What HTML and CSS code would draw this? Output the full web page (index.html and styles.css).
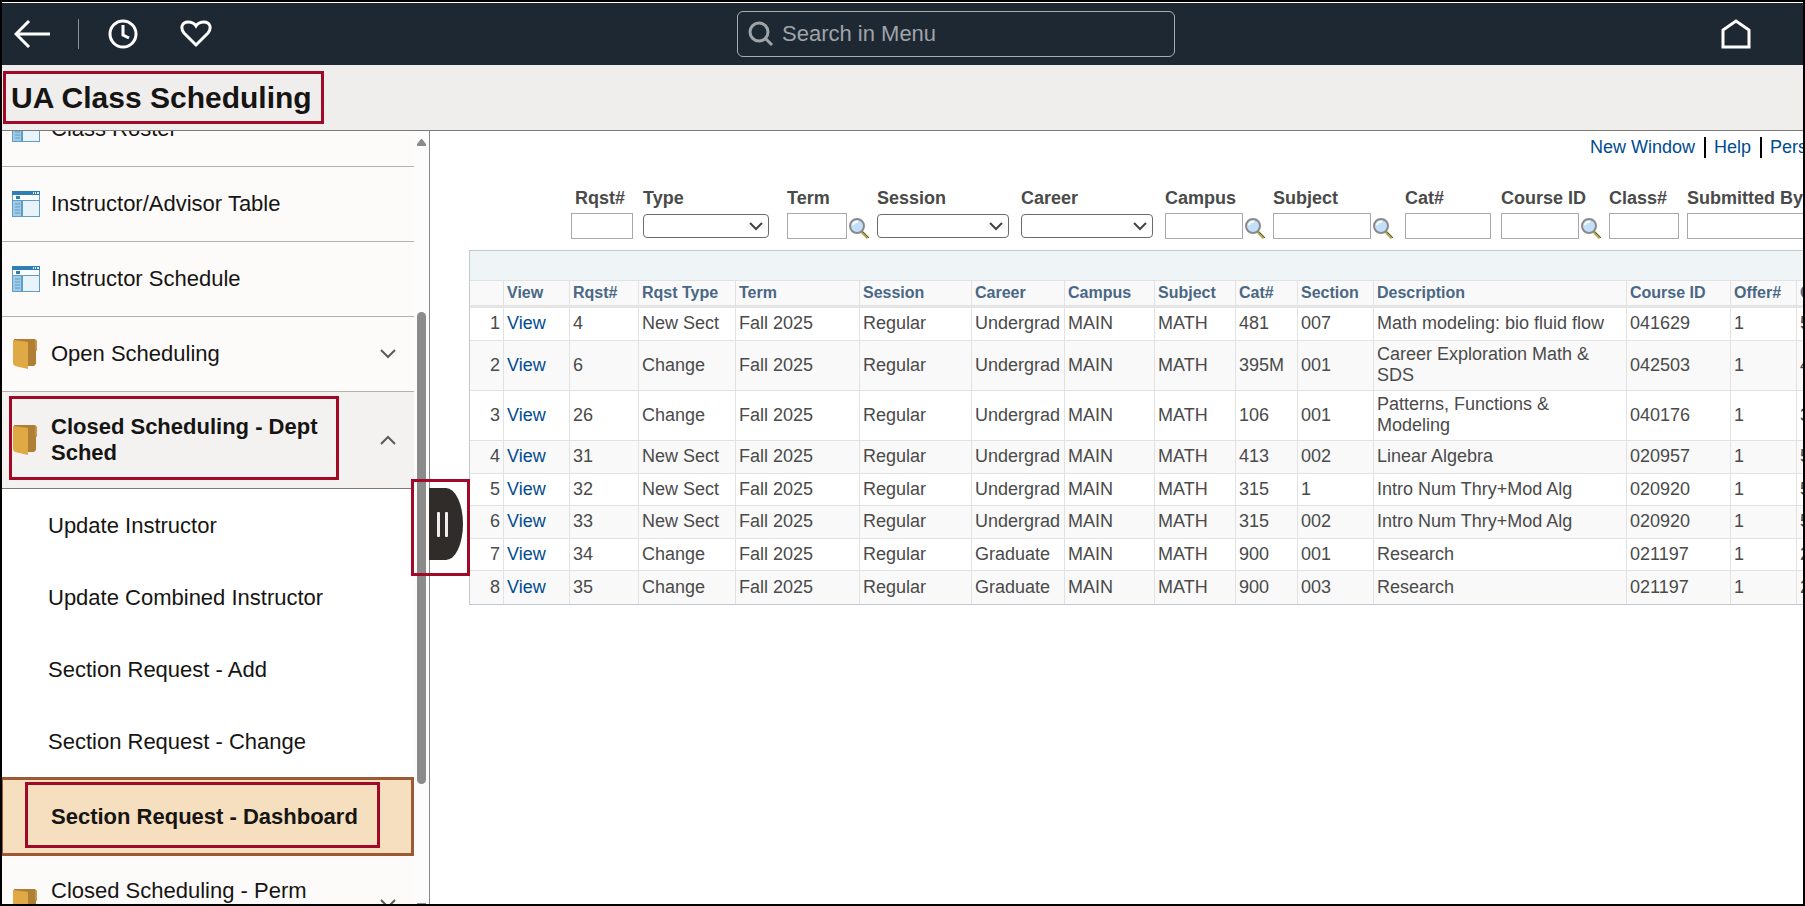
FILE: index.html
```
<!DOCTYPE html>
<html lang="en">
<head>
    <meta charset="UTF-8">
    <meta name="viewport" content="width=device-width, initial-scale=1.0">
    <title>UA Class Scheduling</title>
    <link rel="stylesheet" href="styles.css">
</head>
<body>
    <!-- shared icons -->
    <svg class="defs" width="0" height="0" aria-hidden="true">
        <symbol id="icon-page" viewBox="0 0 28 26">
            <rect x="0" y="0" width="28" height="26" fill="#5f9dc6"/>
            <rect x="0" y="0" width="28" height="4" fill="#2f7fb5"/>
            <path d="M21 1h1v2h-1zM23 1h1v2h-1zM25 1h2v2h-2z" fill="#d9ecf7"/>
            <rect x="1" y="4" width="26" height="5" fill="#ffffff"/>
            <rect x="4" y="5" width="4" height="3" fill="#2f7fb5"/>
            <rect x="1" y="10" width="8" height="15" fill="#9fcbe6"/>
            <path d="M3 13h5M3 16h5M3 19h5M3 22h5" stroke="#5f9dc6" stroke-width="1"/>
            <rect x="11" y="10" width="16" height="15" fill="#e8f3fa"/>
        </symbol>
        <symbol id="icon-folder" viewBox="0 0 26 31">
            <path d="M2 0h21l2 2v9l-1 1v13l-2 2h-7L2 4z" fill="#b07f35"/>
            <path d="M23 1h1l1 2v7l-2 1z" fill="#c8984a"/>
            <path d="M1 1l15 2v27L3 27q-2-1-2-3z" fill="#dfa945"/>
        </symbol>
        <symbol id="icon-down" viewBox="0 0 16 10">
            <path d="M1 1l7 7 7-7" fill="none" stroke="#5c5a58" stroke-width="2"/>
        </symbol>
        <symbol id="icon-up" viewBox="0 0 16 10">
            <path d="M1 9l7-7 7 7" fill="none" stroke="#5c5a58" stroke-width="2"/>
        </symbol>
        <symbol id="icon-lookup" viewBox="0 0 20 21">
            <path d="M12 13l7 7" stroke="#a9a552" stroke-width="3"/>
            <path d="M13 13l7 7" stroke="#5f6028" stroke-width="1"/>
            <circle cx="8" cy="8" r="7" fill="#c3e0fa" stroke="#8a8a8e" stroke-width="2"/>
            <path d="M4 7a4 4 0 0 1 5-3" fill="none" stroke="#ffffff" stroke-width="2"/>
        </symbol>
    </svg>

    <div class="page">
        <header class="topbar">
            <div class="topbar-left">
                <button class="icon-btn back" aria-label="Back">
                    <svg width="36" height="28" viewBox="0 0 36 28" fill="none" stroke="#fff" stroke-width="3"><path d="M2 14h34M15 1L2 14l13 13"/></svg>
                </button>
                <span class="divider"></span>
                <button class="icon-btn recent" aria-label="Recently visited">
                    <svg width="30" height="30" viewBox="0 0 30 30" fill="none" stroke="#fff" stroke-width="3"><circle cx="15" cy="15" r="13"/><path d="M15 6v10l6 3"/></svg>
                </button>
                <button class="icon-btn favorite" aria-label="Favorites">
                    <svg width="32" height="30" viewBox="0 0 32 30" fill="none" stroke="#fff" stroke-width="3"><path d="M16 26L4 14C0 9 2 3 8 3c4 0 6 1 8 4 2-3 4-4 8-4 6 0 8 6 4 11z"/></svg>
                </button>
            </div>
            <div class="search">
                <svg width="26" height="26" viewBox="0 0 26 26" fill="none" stroke="#9fa4aa" stroke-width="3"><circle cx="11" cy="11" r="9"/><path d="M17 17l7 7"/></svg>
                <input type="text" aria-label="Search in Menu" placeholder="Search in Menu">
            </div>
            <div class="topbar-right">
                <button class="icon-btn" aria-label="Home">
                    <svg width="30" height="30" viewBox="0 0 30 30" fill="none" stroke="#fff" stroke-width="3"><path d="M2 28V11l13-9 13 9v17z"/></svg>
                </button>
            </div>
        </header>

        <div class="titlebar">
            <h1 class="highlight">UA Class Scheduling</h1>
        </div>

        <div class="content">
            <aside class="sidebar">
                <nav class="menu">
                    <a href="#" class="item"><svg class="page-icon"><use href="#icon-page"/></svg><span>Class Roster</span></a>
                    <a href="#" class="item"><svg class="page-icon"><use href="#icon-page"/></svg><span>Instructor/Advisor Table</span></a>
                    <a href="#" class="item"><svg class="page-icon"><use href="#icon-page"/></svg><span>Instructor Schedule</span></a>
                    <button class="item folder"><svg class="folder-icon"><use href="#icon-folder"/></svg><span>Open Scheduling</span><svg class="chevron"><use href="#icon-down"/></svg></button>
                    <button class="item folder tall open"><svg class="folder-icon"><use href="#icon-folder"/></svg><span>Closed Scheduling - Dept Sched</span><svg class="chevron"><use href="#icon-up"/></svg></button>
                    <a href="#" class="subitem">Update Instructor</a>
                    <a href="#" class="subitem">Update Combined Instructor</a>
                    <a href="#" class="subitem">Section Request - Add</a>
                    <a href="#" class="subitem">Section Request - Change</a>
                    <a href="#" class="subitem selected">Section Request - Dashboard</a>
                    <button class="item folder tall"><svg class="folder-icon"><use href="#icon-folder"/></svg><span>Closed Scheduling - Perm Sched</span><svg class="chevron"><use href="#icon-down"/></svg></button>
                </nav>
                <div class="scrollbar">
                    <svg width="9" height="7" viewBox="0 0 9 7"><path d="M4 0h1l4 5v2H0V5z" fill="#8b8b8b"/></svg>
                    <div class="thumb"></div>
                    <svg width="9" height="7" viewBox="0 0 9 7"><path d="M4 7h1l4-5V0H0v2z" fill="#8b8b8b"/></svg>
                </div>
            </aside>

            <div class="handle-mark">
                <button class="handle" aria-label="Collapse menu"><span></span><span></span></button>
            </div>

            <main class="main">
                <div class="links">
                    <a href="#">New Window</a>
                    <a href="#">Help</a>
                    <a href="#">Personalize Page</a>
                </div>

                <form class="filters">
                    <div class="field indent">
                        <label for="f-rqst">Rqst#</label>
                        <div class="control"><input type="text" id="f-rqst" class="w-62"></div>
                    </div>
                    <div class="field">
                        <label for="f-type">Type</label>
                        <div class="control"><select id="f-type" class="w-126"><option></option></select></div>
                    </div>
                    <div class="field">
                        <label for="f-term">Term</label>
                        <div class="control"><input type="text" id="f-term" class="w-60"><button type="button" class="lookup" aria-label="Look up Term"><svg><use href="#icon-lookup"/></svg></button></div>
                    </div>
                    <div class="field">
                        <label for="f-session">Session</label>
                        <div class="control"><select id="f-session" class="w-132"><option></option></select></div>
                    </div>
                    <div class="field">
                        <label for="f-career">Career</label>
                        <div class="control"><select id="f-career" class="w-132"><option></option></select></div>
                    </div>
                    <div class="field">
                        <label for="f-campus">Campus</label>
                        <div class="control"><input type="text" id="f-campus" class="w-78"><button type="button" class="lookup" aria-label="Look up Campus"><svg><use href="#icon-lookup"/></svg></button></div>
                    </div>
                    <div class="field">
                        <label for="f-subject">Subject</label>
                        <div class="control"><input type="text" id="f-subject" class="w-98"><button type="button" class="lookup" aria-label="Look up Subject"><svg><use href="#icon-lookup"/></svg></button></div>
                    </div>
                    <div class="field">
                        <label for="f-cat">Cat#</label>
                        <div class="control"><input type="text" id="f-cat" class="w-86"></div>
                    </div>
                    <div class="field">
                        <label for="f-course">Course ID</label>
                        <div class="control"><input type="text" id="f-course" class="w-78"><button type="button" class="lookup" aria-label="Look up Course ID"><svg><use href="#icon-lookup"/></svg></button></div>
                    </div>
                    <div class="field">
                        <label for="f-class">Class#</label>
                        <div class="control"><input type="text" id="f-class" class="w-70"></div>
                    </div>
                    <div class="field">
                        <label for="f-by">Submitted By</label>
                        <div class="control"><input type="text" id="f-by" class="w-132"></div>
                    </div>
                </form>

                <div class="grid">
                    <div class="grid-bar"></div>
                    <table>
                        <colgroup>
                            <col class="c-num"><col class="c-view"><col class="c-rqst"><col class="c-type"><col class="c-term">
                            <col class="c-session"><col class="c-career"><col class="c-campus"><col class="c-subject"><col class="c-cat">
                            <col class="c-section"><col class="c-descr"><col class="c-course"><col class="c-offer"><col class="c-class">
                        </colgroup>
                        <thead>
                            <tr><th></th><th>View</th><th>Rqst#</th><th>Rqst Type</th><th>Term</th><th>Session</th><th>Career</th><th>Campus</th><th>Subject</th><th>Cat#</th><th>Section</th><th>Description</th><th>Course ID</th><th>Offer#</th><th>Class#</th></tr>
                        </thead>
                        <tbody>
                            <tr><td>1</td><td><a href="#">View</a></td><td>4</td><td>New Sect</td><td>Fall 2025</td><td>Regular</td><td>Undergrad</td><td>MAIN</td><td>MATH</td><td>481</td><td>007</td><td>Math modeling: bio fluid flow</td><td>041629</td><td>1</td><td>5</td></tr>
                            <tr><td>2</td><td><a href="#">View</a></td><td>6</td><td>Change</td><td>Fall 2025</td><td>Regular</td><td>Undergrad</td><td>MAIN</td><td>MATH</td><td>395M</td><td>001</td><td>Career Exploration Math &amp; SDS</td><td>042503</td><td>1</td><td>4</td></tr>
                            <tr><td>3</td><td><a href="#">View</a></td><td>26</td><td>Change</td><td>Fall 2025</td><td>Regular</td><td>Undergrad</td><td>MAIN</td><td>MATH</td><td>106</td><td>001</td><td>Patterns, Functions &amp; Modeling</td><td>040176</td><td>1</td><td>3</td></tr>
                            <tr><td>4</td><td><a href="#">View</a></td><td>31</td><td>New Sect</td><td>Fall 2025</td><td>Regular</td><td>Undergrad</td><td>MAIN</td><td>MATH</td><td>413</td><td>002</td><td>Linear Algebra</td><td>020957</td><td>1</td><td>5</td></tr>
                            <tr><td>5</td><td><a href="#">View</a></td><td>32</td><td>New Sect</td><td>Fall 2025</td><td>Regular</td><td>Undergrad</td><td>MAIN</td><td>MATH</td><td>315</td><td>1</td><td>Intro Num Thry+Mod Alg</td><td>020920</td><td>1</td><td>5</td></tr>
                            <tr><td>6</td><td><a href="#">View</a></td><td>33</td><td>New Sect</td><td>Fall 2025</td><td>Regular</td><td>Undergrad</td><td>MAIN</td><td>MATH</td><td>315</td><td>002</td><td>Intro Num Thry+Mod Alg</td><td>020920</td><td>1</td><td>5</td></tr>
                            <tr><td>7</td><td><a href="#">View</a></td><td>34</td><td>Change</td><td>Fall 2025</td><td>Regular</td><td>Graduate</td><td>MAIN</td><td>MATH</td><td>900</td><td>001</td><td>Research</td><td>021197</td><td>1</td><td>2</td></tr>
                            <tr><td>8</td><td><a href="#">View</a></td><td>35</td><td>Change</td><td>Fall 2025</td><td>Regular</td><td>Graduate</td><td>MAIN</td><td>MATH</td><td>900</td><td>003</td><td>Research</td><td>021197</td><td>1</td><td>2</td></tr>
                        </tbody>
                    </table>
                </div>
            </main>
        </div>
    </div>
</body>
</html>
```
FILE: styles.css
```
* {
    box-sizing: border-box;
}
body {
    margin: 0;
    font-family: "Liberation Sans", Arial, sans-serif;
    font-size: 18px;
    color: #4a4a4a;
    background-color: #fff;
}
a {
    color: #004b91;
    text-decoration: none;
}
button {
    font-family: inherit;
    padding: 0;
    border: none;
    background: none;
    cursor: pointer;
}
.defs {
    display: block;
}
.page {
    display: flex;
    flex-direction: column;
    height: 100vh;
    overflow: hidden;
    border: 2px solid #000;
}

/* top bar */
.topbar {
    display: flex;
    align-items: center;
    height: 63px;
    flex-shrink: 0;
    padding: 0 52px 0 12px;
    background-color: #1e2833;
    border-top: 1px solid #fff;
}
.topbar-left {
    display: flex;
    align-items: center;
    flex: 723;
}
.topbar-right {
    display: flex;
    justify-content: flex-end;
    flex: 576;
}
.icon-btn svg {
    display: block;
}
.divider {
    width: 1px;
    height: 30px;
    margin: 0 29px 0 28px;
    background-color: #8b9198;
}
.favorite {
    margin-left: 42px;
}
.search {
    display: flex;
    align-items: center;
    gap: 8px;
    width: 438px;
    height: 46px;
    padding: 0 10px;
    border: 1px solid #a8adb3;
    border-radius: 6px;
}
.search input {
    flex: 1;
    min-width: 0;
    padding: 0;
    border: none;
    outline: none;
    background: none;
    color: #fff;
    font-family: inherit;
    font-size: 22px;
}
.search input::placeholder {
    color: #9fa4aa;
    opacity: 1;
}

/* page title */
.titlebar {
    flex-shrink: 0;
    height: 66px;
    padding: 6px 1px;
    background-color: #f0eeec;
    border-bottom: 1px solid #7d7a78;
}
.highlight {
    width: max-content;
    margin: 0;
    padding: 0 9px 0 5px;
    border: 3px solid #a00a28;
    font-size: 30px;
    line-height: 47px;
    color: #161513;
}

/* layout */
.content {
    position: relative;
    display: flex;
    flex: 1;
    min-height: 0;
}
.sidebar {
    display: flex;
    flex-shrink: 0;
    width: 428px;
    overflow: hidden;
    border-right: 1px solid #8b8886;
    background-color: #fcfbfa;
}
.menu {
    flex: 1;
    /* list is scrolled down a little */
    margin-top: -39px;
}
.item {
    display: flex;
    align-items: center;
    gap: 11px;
    width: 100%;
    height: 75px;
    padding: 0 18px 0 10px;
    border-bottom: 1px solid #b3b0ae;
    font-size: 22px;
    line-height: 26px;
    text-align: left;
    color: #161513;
}
.item span {
    flex: 1;
}
.item.folder span {
    padding-right: 40px;
}
.item.tall {
    height: 97px;
}
.page-icon {
    width: 28px;
    height: 26px;
}
.folder-icon {
    width: 26px;
    height: 31px;
    margin-right: 2px;
}
.chevron {
    width: 16px;
    height: 10px;
}
.item.open {
    position: relative;
    font-weight: bold;
    background-color: #f4f2f1;
    border-bottom-color: #7d7a78;
}
.item.open::after {
    content: "";
    position: absolute;
    top: 4px;
    left: 7px;
    right: 75px;
    bottom: 8px;
    border: 3px solid #a00a28;
}
.subitem {
    display: flex;
    align-items: center;
    height: 72px;
    padding: 2px 0 0 46px;
    font-size: 22px;
    color: #161513;
    background-color: #fff;
}
.subitem.selected {
    position: relative;
    height: 79px;
    padding: 0 0 0 48px;
    font-weight: bold;
    background-color: #f5dfbe;
    border: 3px solid #9b5a33;
    border-left-width: 1px;
}
.subitem.selected::after {
    content: "";
    position: absolute;
    top: 2px;
    left: 22px;
    right: 31px;
    bottom: 5px;
    border: 3px solid #a00a28;
}
.scrollbar {
    display: flex;
    flex-direction: column;
    align-items: center;
    width: 15px;
    padding-top: 8px;
    background-color: #fcfcfc;
}
.scrollbar svg {
    flex-shrink: 0;
}
.thumb {
    flex-shrink: 0;
    width: 9px;
    height: 472px;
    margin: 166px 0 119px;
    border-radius: 5px;
    background-color: #8b8b8b;
}

/* collapse handle sits over the sidebar edge */
.handle-mark {
    position: absolute;
    top: 348px;
    left: 409px;
    width: 59px;
    height: 97px;
    padding: 6px 0 0 15px;
    border: 3px solid #a00a28;
    z-index: 1;
}
.handle {
    display: flex;
    align-items: center;
    justify-content: center;
    gap: 5px;
    width: 34px;
    height: 72px;
    padding-right: 7px;
    background-color: #302c29;
    border-radius: 0 17px 17px 0 / 0 36px 36px 0;
}
.handle span {
    width: 3px;
    height: 25px;
    border-radius: 1px;
    background-color: #f1efed;
}

/* main area */
.main {
    flex: 1;
    min-width: 0;
    overflow: hidden;
    padding: 6px 0 0 39px;
    white-space: nowrap;
}
.links {
    display: flex;
    margin-left: 1112px;
}
.links a {
    line-height: 21px;
    padding: 0 9px 0 8px;
}
.links a:first-child {
    padding-left: 9px;
}
.links a + a {
    border-left: 2px solid #000;
}
.filters {
    display: grid;
    grid-template-columns: 72px 144px 90px 144px 144px 108px 132px 96px 108px 78px 132px;
    margin: 29px 0 11px 102px;
}
.field label {
    display: block;
    font-weight: bold;
    line-height: 22px;
}
.indent label {
    padding-left: 4px;
}
.control {
    display: flex;
    align-items: center;
    height: 26px;
    margin-top: 4px;
}
.control input {
    height: 26px;
    border: 1px solid #a9a9a9;
    background-color: #fff;
}
.control select {
    height: 24px;
    border: 1px solid #6b6b6b;
    border-radius: 4px;
    appearance: none;
    background: #fff url("data:image/svg+xml,%3Csvg xmlns='http://www.w3.org/2000/svg' width='14' height='9'%3E%3Cpath d='M1 1l6 6 6-6' fill='none' stroke='%23444' stroke-width='2'/%3E%3C/svg%3E") no-repeat right 5px center;
}
.lookup {
    margin: 4px 0 0 2px;
}
.lookup svg {
    display: block;
    width: 20px;
    height: 21px;
}
.w-60 { width: 60px; }
.w-62 { width: 62px; }
.w-70 { width: 70px; }
.w-78 { width: 78px; }
.w-86 { width: 86px; }
.w-98 { width: 98px; }
.w-126 { width: 126px; }
.w-132 { width: 132px; }

/* results grid */
.grid {
    width: max-content;
    border: 1px solid #c4c8d0;
}
.grid-bar {
    height: 30px;
    background-color: #eff5f6;
    border-bottom: 1px solid #dfe3e6;
}
table {
    width: 1407px;
    table-layout: fixed;
    border-collapse: separate;
    border-spacing: 0;
}
.c-num { width: 34px; }
.c-view { width: 66px; }
.c-rqst { width: 69px; }
.c-type { width: 97px; }
.c-term { width: 124px; }
.c-session { width: 112px; }
.c-career { width: 93px; }
.c-campus { width: 90px; }
.c-subject { width: 81px; }
.c-cat { width: 62px; }
.c-section { width: 76px; }
.c-descr { width: 253px; }
.c-course { width: 104px; }
.c-offer { width: 66px; }
.c-class { width: 80px; }
th {
    height: 27px;
    padding: 0 3px;
    font-size: 16px;
    text-align: left;
    color: #4a6785;
    background-color: #f9f9f9;
    border-right: 1px solid #e2e2e2;
    border-bottom: 3px solid #e5e5e5;
}
td {
    height: 33px;
    padding: 3px 0 4px 3px;
    line-height: 21px;
    border-right: 1px solid #e2e2e2;
    border-bottom: 1px solid #e2e2e2;
}
tr:nth-child(odd) td {
    height: 32px;
}
tr:first-child td {
    height: 33px;
}
tr:nth-child(even) td {
    background-color: #f9f9f9;
}
tbody tr:last-child td {
    border-bottom: none;
}
td:first-child {
    padding-right: 3px;
    text-align: right;
}
td:nth-child(12) {
    padding-right: 20px;
    white-space: normal;
}
```
